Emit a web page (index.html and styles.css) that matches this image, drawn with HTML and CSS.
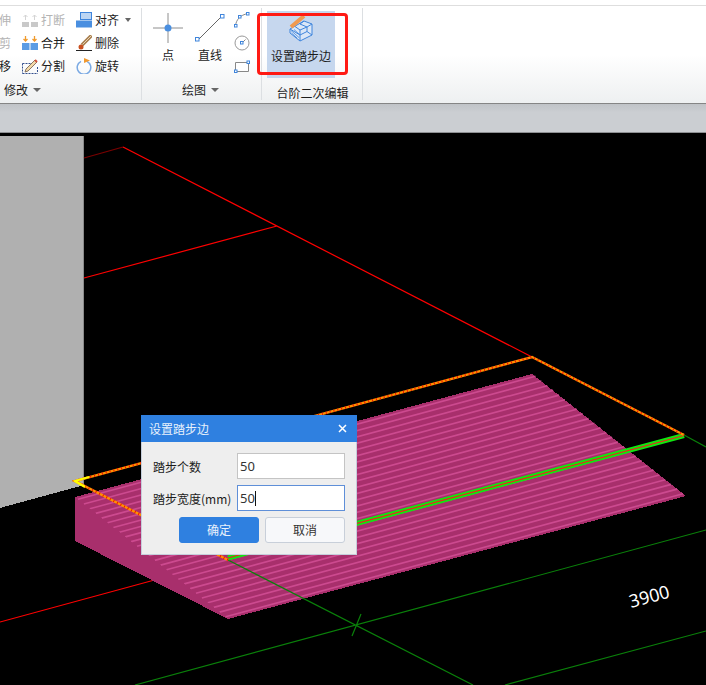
FILE: index.html
```html
<!DOCTYPE html>
<html lang="zh">
<head>
<meta charset="utf-8">
<title>设置踏步边</title>
<link rel="stylesheet" href="styles.css">
</head>
<body>
<div class="app">
  <div class="topline"></div>
  <div class="ribbon">
    <section class="group group-edit">
      <div class="edit-grid">
        <div class="tool tool-cut is-disabled"><span>伸</span></div>
        <div class="tool is-disabled">
          <svg class="ico" viewBox="0 0 16 16"><path d="M0 10h7v5H0zM9 10h7v5H9z" fill="#c9c9c9"/><path d="M3.500 3v5M1.500 5l2-2 2 2M12.500 3v5M10.500 5l2-2 2 2" stroke="#d4d4d4" fill="none"/></svg>
          <span>打断</span>
        </div>
        <div class="tool">
          <svg class="ico" viewBox="0 0 16 16"><rect x="4.500" y=".5" width="11" height="7" fill="#bcd5f3" stroke="#3f85dc"/><rect y="8.500" width="16" height="7" fill="#4a8fe0"/></svg>
          <span>对齐</span><i class="caret caret-inline"></i>
        </div>
        <div class="tool tool-cut is-disabled"><span>剪</span></div>
        <div class="tool">
          <svg class="ico" viewBox="0 0 16 16"><path d="M0 8h7.500v7H0zM8.500 8H16v7H8.500z" fill="#5b9ce4"/><path d="M3.500 1v4M1.500 4l2 2 2-2M12.500 1v4M10.500 4l2 2 2-2" stroke="#f09a2c" fill="none" stroke-width="1.300"/></svg>
          <span>合并</span>
        </div>
        <div class="tool">
          <svg class="ico" viewBox="0 0 16 16"><path d="M15.500.5l-9.500 9.500" stroke="#a87f4f" stroke-width="3.500"/><path d="M15.500.5l-9 9" stroke="#e7d3b4" stroke-width="1"/><circle cx="5" cy="12" r="2.500" fill="#c9501f"/><path d="M0 15.500h16" stroke="#222"/></svg>
          <span>删除</span>
        </div>
        <div class="tool tool-cut"><span>移</span></div>
        <div class="tool">
          <svg class="ico" viewBox="0 0 16 16"><path d="M.5 5.500h10M.5 5.500v10M.5 15.500h15M15.500 9v6.500" stroke="#35508f" stroke-dasharray="2 1" fill="none"/><path d="M4 11L13 2l2 2-9 9-3 1z" fill="#f3d9a8" stroke="#6e5a48" stroke-width=".8"/><path d="M13 2l2 2" stroke="#d2503a" stroke-width="2"/></svg>
          <span>分割</span>
        </div>
        <div class="tool">
          <svg class="ico" viewBox="0 0 16 16"><path d="M5 3.300a6.800 6.800 0 1 0 6 0" fill="none" stroke="#7aa9e3" stroke-width="1.500"/><path d="M8 0l6 2.500-6 2.500z" fill="#f2992e"/></svg>
          <span>旋转</span>
        </div>
      </div>
      <div class="group-label label-left">修改<i class="caret"></i></div>
    </section>

    <section class="group group-draw">
      <div class="draw-row">
        <div class="big-tool">
          <svg class="big-ico" viewBox="0 0 30 30"><path d="M0 15h30M15 0v30" stroke="#8e8e8e" fill="none"/><circle cx="15" cy="15" r="3.500" fill="#4a8fe0"/></svg>
          <span>点</span>
        </div>
        <div class="big-tool">
          <svg class="big-ico" viewBox="0 0 30 30"><path d="M3 27L27 3" stroke="#666" fill="none"/><rect x=".5" y="24.500" width="3.500" height="3.500" fill="#fff" stroke="#3f85dc"/><rect x="25.500" y="1.500" width="3.500" height="3.500" fill="#fff" stroke="#3f85dc"/></svg>
          <span>直线</span>
        </div>
        <div class="mini-col">
          <svg class="mini" viewBox="0 0 16 16"><path d="M1.500 14C2 8 6 3 14 1.500" stroke="#888" fill="none"/><rect x=".5" y="12.500" width="2.500" height="2.500" fill="#fff" stroke="#3f85dc"/><rect x="4.500" y="3.500" width="2.500" height="2.500" fill="#fff" stroke="#3f85dc"/><rect x="12.500" y=".5" width="2.500" height="2.500" fill="#fff" stroke="#3f85dc"/></svg>
          <svg class="mini" viewBox="0 0 16 16"><circle cx="8" cy="8" r="7" fill="#fff" stroke="#999"/><path d="M8 8l3.500-3.500" stroke="#888"/><rect x="6.500" y="6.500" width="2.500" height="2.500" fill="#fff" stroke="#3f85dc"/></svg>
          <svg class="mini" viewBox="0 0 16 16"><path d="M1.500 4.500h13v9h-13z" fill="#fff" stroke="#888"/><rect x=".5" y="12" width="2.500" height="2.500" fill="#fff" stroke="#3f85dc"/><rect x="13" y="3" width="2.500" height="2.500" fill="#fff" stroke="#3f85dc"/></svg>
        </div>
      </div>
      <div class="group-label label-draw">绘图<i class="caret"></i></div>
    </section>

    <section class="group group-step">
      <div class="step-btn">
        <svg class="step-ico" viewBox="0 0 24 28"><path d="M1 15L15 7l8 3v11l-12 6-10-8z" fill="#dbe7f7" stroke="#3f85dc" stroke-linejoin="round"/><path d="M1 15l10 6v6M11 21l7-3.500V13l5-3M18 17.500l5 3.500M11 21v-5l-5-3.500M11 16l7-3M15 7l-4 3 7 3" fill="none" stroke="#3f85dc"/><path d="M2.500 19l5.500 5M2 16.500l8 7M5 15.500l5.500 5" stroke="#3f85dc" stroke-width=".8"/><path d="M2 13L15 2" stroke="#f09a50" stroke-width="4"/></svg>
        <span>设置踏步边</span>
      </div>
      <div class="group-label label-low">台阶二次编辑</div>
      <div class="callout"></div>
    </section>
  </div>
  <div class="band"></div>

  <main class="canvas">
    <svg class="scene" viewBox="0 133 706 552" width="706" height="552">
      <path class="crisp" d="M0 136H84V485L0 508z" fill="#b0b0b0"/>
      <path class="crisp" d="M83.500 136V485" stroke="#8a8a8a" fill="none"/>
      <path d="M84 158L123 147" stroke="#7a0000" stroke-width="1.200" fill="none"/>
      <path d="M123 147L532 357M84 278L277 226M0 622L228 560" stroke="#ff0000" stroke-width="1.200" fill="none"/>
      <path class="crisp" d="M532 374L686 496L228 619L75 497z" fill="#a82f6c"/>
      <path d="M78 499.300l457.500-123m-451.600 127.700l457.500-123m-451.600 127.700l457.500-123m-451.600 127.700l457.500-123m-451.600 127.700l457.500-123m-451.600 127.700l457.500-123m-451.600 127.700l457.500-123m-451.600 127.700l457.500-123m-451.600 127.700l457.500-123m-451.600 127.700l457.500-123m-451.600 127.700l457.500-123m-451.600 127.700l457.500-123m-451.600 127.700l457.500-123m-451.600 127.700l457.500-123m-451.600 127.700l457.500-123m-451.600 127.700l457.500-123m-451.600 127.700l457.500-123m-451.600 127.700l457.500-123m-451.600 127.700l457.500-123m-451.600 127.700l457.500-123m-451.600 127.700l457.500-123m-451.600 127.700l457.500-123m-451.600 127.700l457.500-123m-451.600 127.700l457.500-123m-451.600 127.700l457.500-123m-451.600 127.700l457.500-123" stroke="#cc4a8f" stroke-width="1.700" fill="none"/>
      <path class="crisp" d="M75 497L228 619L75 541z" fill="#a82f6c"/>
      <path d="M228 560L473 685M135 685L706 530M505 685L706 631M684 435L706 447M361 614L352 636" stroke="#0a800a" stroke-width="1.200" fill="none"/>
      <path d="M228 558L684 435.500" stroke="#10e610" stroke-width="5" fill="none"/>
      <path d="M228 558L684 435.500" stroke="#f02020" stroke-width="1.200" fill="none"/>
      <path d="M228 560L75 481L532 357L684 435" stroke="#ff9000" stroke-width="2.400" fill="none"/>
      <path d="M228 560L75 481L532 357L684 435" stroke="#f01000" stroke-width="2.400" stroke-dasharray="1 3" fill="none"/>
      <path d="M89 477L75 481L85 487" stroke="#ffff00" stroke-width="2.200" fill="none"/>
      <text class="dim" transform="translate(631 608) rotate(-15)">3900</text>
    </svg>

    <div class="dialog">
      <header class="dialog-title"><span>设置踏步边</span><svg class="close" viewBox="0 0 9 9"><path d="M1 1l7 7M8 1L1 8" stroke="#fff" stroke-width="1.500" fill="none"/></svg></header>
      <div class="dialog-body">
        <div class="field"><label class="field-label">踏步个数</label><div class="input">50</div></div>
        <div class="field"><label class="field-label">踏步宽度(mm)</label><div class="input is-focus">50<i class="cursor"></i></div></div>
        <div class="actions">
          <button class="btn btn-primary" type="button">确定</button>
          <button class="btn" type="button">取消</button>
        </div>
      </div>
    </div>
  </main>
</div>
</body>
</html>
```
FILE: styles.css
```css
* { box-sizing: border-box; }
html, body { margin: 0; padding: 0; overflow: hidden; background: #000; }
body { font: 12px/16px "Noto Sans CJK SC", "Noto Sans", sans-serif; color: #1c1c1c; }
.app { width: 706px; height: 685px; display: flex; flex-direction: column; overflow: hidden; }

.topline { height: 6px; background: #fff; border-bottom: 1px solid #dedede; flex: none; }
.ribbon { height: 98px; flex: none; display: flex; background: linear-gradient(#fff 0, #fff 50%, #eef0f1 100%); border-bottom: 1px solid #858585; }
.group { position: relative; display: flex; flex-direction: column; height: 97px; }
.group::after { content: ""; position: absolute; right: 0; top: 2px; bottom: 3px; width: 1px; background: #dcdfe2; }
.group-label { height: 22px; display: flex; align-items: center; justify-content: center; flex: none; margin-top: auto; margin-bottom: 2px; }
.label-left { justify-content: flex-start; padding-left: 4px; }
.label-draw { padding-right: 3px; }
.label-low { padding-top: 6px; }
.caret { display: inline-block; width: 0; height: 0; margin-left: 5px; border: 4px solid transparent; border-top: 4px solid #666; border-bottom: 0; }

.group-edit { width: 142px; overflow: hidden; }
.edit-grid { display: grid; grid-template-columns: 21px 54px 60px; grid-auto-rows: 23px; margin: 2px 0 0 1px; }
.tool { display: flex; align-items: center; gap: 3px; white-space: nowrap; }
.tool-cut { margin-left: -2px; }
.is-disabled { color: #b4b4b4; }
.ico { width: 16px; height: 16px; flex: none; }
.caret-inline { margin-left: 3px; border-width: 3px; border-top-width: 4px; border-bottom-width: 0; }

.group-draw { width: 120px; }
.draw-row { display: flex; padding-left: 5px; }
.big-tool { width: 42px; display: flex; flex-direction: column; align-items: center; padding-top: 7px; gap: 4px; }
.big-ico { width: 30px; height: 30px; display: block; }
.mini-col { width: 22px; display: flex; flex-direction: column; align-items: center; gap: 7px; padding-top: 6px; }
.mini { width: 16px; height: 16px; display: block; }

.group-step { width: 101px; }
.step-btn { width: 68px; height: 67px; margin: 5px 0 0 5px; background: #c6d7ee; display: flex; flex-direction: column; align-items: center; padding-top: 3px; gap: 6px; white-space: nowrap; }
.step-ico { width: 24px; height: 28px; display: block; flex: none; margin-left: -1px; }
.callout { position: absolute; left: -5px; top: 7px; width: 91px; height: 62px; border: 3px solid #ff1a14; border-radius: 4px; }

.band { height: 29px; flex: none; background: linear-gradient(#c0c3c7, #cbced2 30%); border-bottom: 1px solid #8e9093; }

.canvas { position: relative; flex: 1; background: #000; }
.scene { display: block; }
.crisp { shape-rendering: crispEdges; }
.dim { fill: #fff; font: 18px "Noto Sans", sans-serif; }

.dialog { position: absolute; left: 141px; top: 282px; width: 216px; height: 140px; background: #eee; border: 1px solid #c5cedb; border-top: 0; display: flex; flex-direction: column; }
.dialog-title { height: 27px; margin: 0 -1px; background: #2f80e0; color: #e8f1fc; display: flex; align-items: center; justify-content: space-between; padding: 0 10px 0 8px; flex: none; }
.close { width: 9px; height: 9px; display: block; }
.dialog-body { padding: 11px 11px 0 11px; display: flex; flex-direction: column; gap: 6px; }
.field { display: flex; align-items: center; justify-content: space-between; height: 26px; white-space: nowrap; }
.field-label { padding-top: 1px; }
.input { width: 108px; height: 26px; background: #fff; border: 1px solid #c4c4c4; padding-left: 2px; font: 13px/24px "Noto Sans", sans-serif; color: #333; }
.is-focus { border-color: #5f8fd8; }
.cursor { display: inline-block; width: 1px; height: 15px; background: #111; vertical-align: -3px; }
.actions { display: flex; justify-content: flex-end; gap: 6px; }
.btn { width: 80px; height: 26px; font: inherit; color: #333; background: #f7f8fa; border: 1px solid #c8cfd9; border-radius: 3px; padding: 0; }
.btn-primary { background: #2f80e0; border-color: #2f80e0; color: #e8f1fc; }
```
